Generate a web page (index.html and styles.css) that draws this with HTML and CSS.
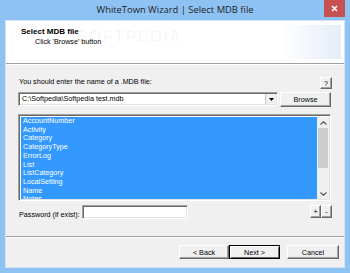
FILE: index.html
```html
<!DOCTYPE html>
<html lang="en">
<head>
  <meta charset="UTF-8" />
  <title>WhiteTown Wizard | Select MDB file</title>
  <link rel="stylesheet" href="styles.css">
</head>
<body>
  <div class="window">
    <div class="titlebar">
      <span class="title">WhiteTown Wizard | Select MDB file</span>
      <button class="close" aria-label="Close">
        <svg width="7" height="7" viewBox="0 0 7 7"><path d="M1 1L6 6M6 1L1 6" stroke="#fff" stroke-width="1.6"/></svg>
      </button>
    </div>

    <div class="client">
      <div class="banner">
        <div class="banner-inner">
          <div class="step-title">Select MDB file</div>
          <div class="step-hint">Click 'Browse' button</div>
        </div>
        <span class="watermark">SOFTPEDIA</span>
      </div>

      <main class="content">
        <div class="row row-label">
          <span class="label">You should enter the name of a .MDB file:</span>
          <button class="btn btn-help">?</button>
        </div>

        <div class="row row-file">
          <div class="combo field">
            <span class="combo-text">C:\Softpedia\Softpedia test.mdb</span>
            <span class="combo-arrow">
              <svg width="5" height="3" viewBox="0 0 5 3"><path d="M0 0H5L2.5 3Z" fill="#000"/></svg>
            </span>
          </div>
          <button class="btn btn-browse">Browse</button>
        </div>

        <div class="listbox field">
          <ul class="items">
            <li>AccountNumber</li>
            <li>Activity</li>
            <li>Category</li>
            <li>CategoryType</li>
            <li>ErrorLog</li>
            <li>List</li>
            <li>ListCategory</li>
            <li>LocalSetting</li>
            <li>Name</li>
            <li>Notes</li>
            <li>Payee</li>
          </ul>
          <div class="scrollbar">
            <span class="arrow">
              <svg width="7" height="4" viewBox="0 0 7 4"><path d="M0.5 3.5L3.5 0.8L6.5 3.5" fill="none" stroke="#555" stroke-width="1.2"/></svg>
            </span>
            <span class="thumb"></span>
            <span class="track"></span>
            <span class="arrow">
              <svg width="7" height="4" viewBox="0 0 7 4"><path d="M0.5 0.5L3.5 3.2L6.5 0.5" fill="none" stroke="#555" stroke-width="1.2"/></svg>
            </span>
          </div>
        </div>

        <div class="row row-pass">
          <label class="label" for="pass">Password (if exist):</label>
          <input class="pass field" id="pass" type="password" />
          <div class="pm">
            <button class="btn btn-small">+</button>
            <button class="btn btn-small">-</button>
          </div>
        </div>
      </main>

      <footer class="footer">
        <button class="btn btn-nav">&lt; Back</button>
        <button class="btn btn-nav btn-default">Next &gt;</button>
        <button class="btn btn-nav btn-cancel">Cancel</button>
      </footer>
    </div>
  </div>
</body>
</html>
```

FILE: styles.css
```css
* {
  box-sizing: border-box;
}

body {
  margin: 0;
  font-family: 'Liberation Sans', Arial, sans-serif;
  font-size: 7.2px;
  color: #000;
}

.window {
  width: 350px;
  height: 273px;
  background: #8ec2f3;
  display: flex;
  flex-direction: column;
}

.titlebar {
  position: relative;
  height: 20px;
  display: flex;
  justify-content: center;
  align-items: flex-start;
}

.title {
  font-family: 'Open Sans', 'Noto Sans', sans-serif;
  font-size: 9.4px;
  line-height: 12px;
  padding-top: 4px;
  color: #1e1e1e;
}

.close {
  position: absolute;
  top: 0;
  right: 5px;
  width: 21px;
  height: 17px;
  border: none;
  padding: 0;
  background: #c75050;
  display: flex;
  align-items: center;
  justify-content: center;
}

.client {
  flex: 1;
  margin: 0 5px 5px;
  border: 1px solid #d2e5f8;
  background: #f0f0f0;
  display: flex;
  flex-direction: column;
}

/* header strip */
.banner {
  position: relative;
  height: 43px;
  background: #fff;
  border-bottom: 1px solid #a0a0a0;
  box-shadow: 0 1px 0 #fff;
  padding: 4px 3px 4px 0;
}

.banner-inner {
  height: 34px;
  padding: 2px 0 0 15px;
  background: linear-gradient(to right, #fff 82%, #e6edf7);
}

.step-title {
  font-weight: 700;
  font-size: 8px;
  line-height: 10px;
}

.step-hint {
  line-height: 10px;
  padding-left: 14px;
}

.watermark {
  position: absolute;
  left: 70px;
  top: 6px;
  font-size: 17px;
  font-weight: 700;
  letter-spacing: 1px;
  color: rgba(0, 0, 0, 0.035);
}

.content {
  padding: 13px 13px 0 12px;
}

.row {
  display: flex;
}

.row-label {
  justify-content: space-between;
  align-items: flex-start;
  height: 13px;
}

.label {
  line-height: 9px;
  padding-left: 1px;
}

.row-file {
  margin-top: 2px;
  gap: 2px;
  align-items: flex-start;
}

/* sunken input look */
.field {
  background: #fff;
  border: 1px solid;
  border-color: #a0a0a0 #fff #fff #a0a0a0;
  box-shadow: inset 1px 1px 0 #696969, inset -1px -1px 0 #e3e3e3;
}

.combo {
  flex: 1;
  height: 14px;
  padding: 2px 1px 2px 3px;
  display: flex;
  align-items: center;
}

.combo-text {
  flex: 1;
  line-height: 10px;
}

.combo-arrow {
  width: 11px;
  height: 10px;
  background: #f0f0f0;
  border-left: 1px solid #c8c8c8;
  display: flex;
  align-items: center;
  justify-content: center;
}

.btn {
  font: inherit;
  color: #000;
  background: #f0f0f0;
  padding: 0;
  border: 1px solid;
  border-color: #fff #696969 #696969 #fff;
  box-shadow: inset -1px -1px 0 #a0a0a0;
}

.btn-help {
  width: 12px;
  height: 12px;
  margin-right: -1px;
}

.btn-browse {
  width: 51px;
  height: 15px;
}

.listbox {
  margin-top: 7px;
  height: 87px;
  padding: 2px 1px 1px 2px;
  display: flex;
  overflow: hidden;
}

.items {
  flex: 1;
  margin: 0;
  padding: 0 0 0 2px;
  list-style: none;
  background: #3399ff;
  color: #fff;
  overflow: hidden;
}

.items li {
  line-height: 8.7px;
}

.scrollbar {
  width: 12px;
  background: #f0f0f0;
  display: flex;
  flex-direction: column;
  align-items: center;
}

.arrow {
  height: 11px;
  display: flex;
  align-items: center;
  justify-content: center;
}

.thumb {
  width: 10px;
  height: 40px;
  background: #cdcdcd;
}

.track {
  flex: 1;
}

.row-pass {
  margin-top: 4px;
  align-items: flex-end;
  height: 14px;
}

.row-pass .label {
  width: 64px;
}

.pass {
  width: 106px;
  height: 14px;
  padding: 0;
}

.pm {
  margin-left: auto;
  margin-right: -1px;
  display: flex;
  align-self: flex-start;
}

.btn-small {
  width: 11px;
  height: 13px;
}

.footer {
  margin-top: auto;
  height: 31px;
  border-top: 1px solid #a0a0a0;
  box-shadow: inset 0 1px 0 #fff;
  padding: 8px 5px 0 0;
  display: flex;
  justify-content: flex-end;
  align-items: flex-start;
}

.btn-nav {
  width: 50px;
  height: 14px;
}

.btn-default {
  width: 51px;
  border-color: #000;
  box-shadow: inset 1px 1px 0 #fff, inset -1px -1px 0 #696969;
}

.btn-cancel {
  width: 52px;
  margin-left: 7px;
}
```
